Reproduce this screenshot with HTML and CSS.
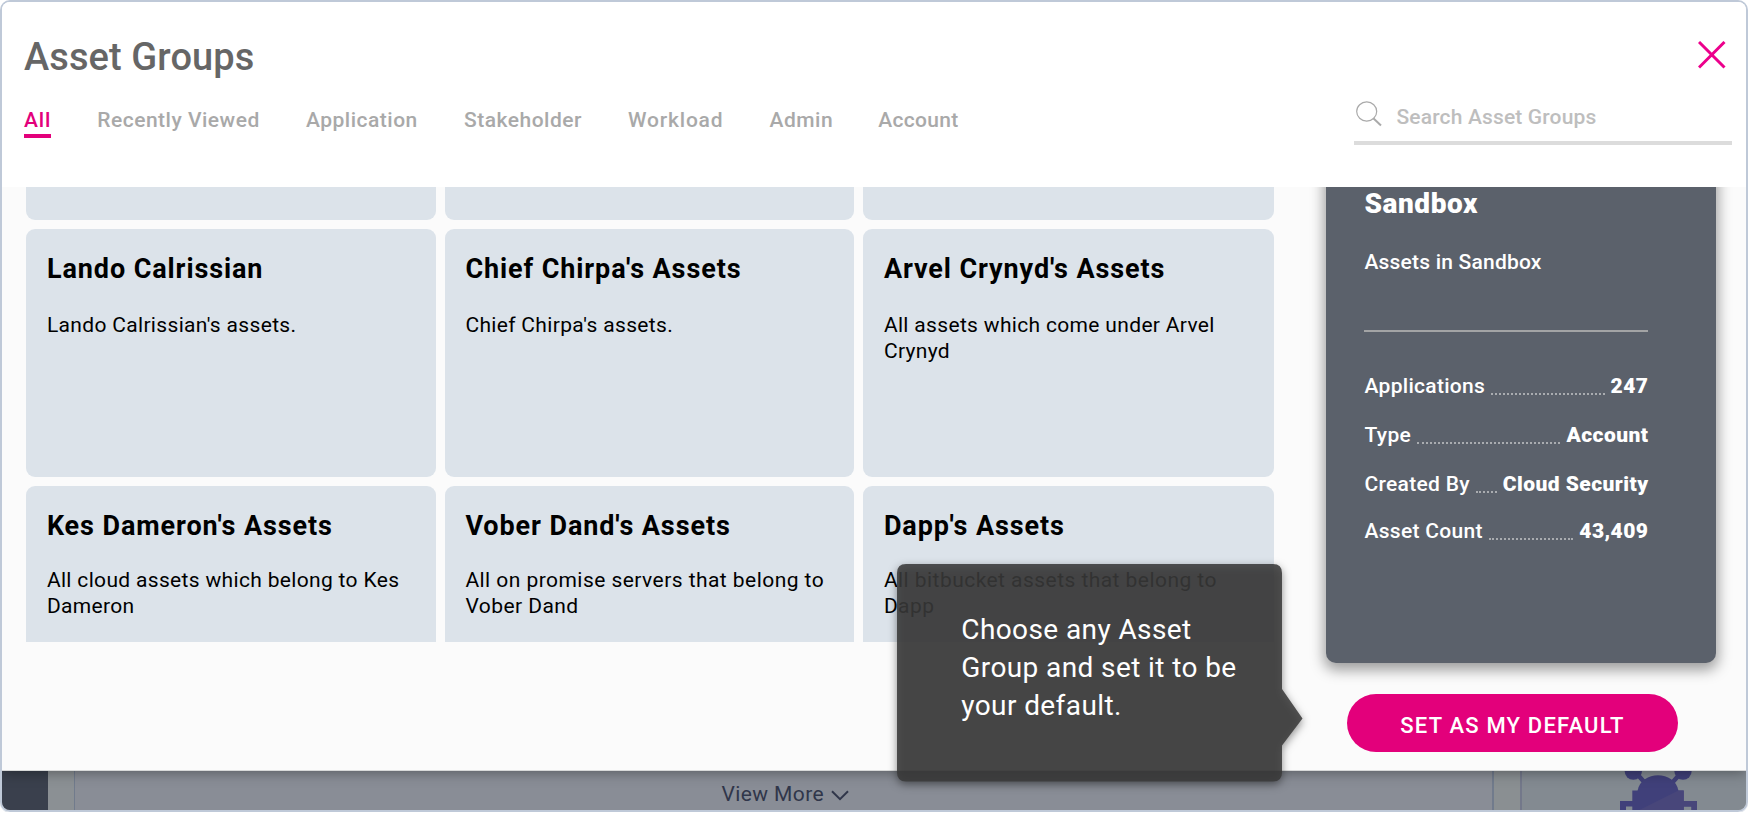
FILE: index.html
```html
<!DOCTYPE html>
<html lang="en">
<head>
<meta charset="utf-8">
<title>Asset Groups</title>
<link rel="stylesheet" href="styles.css">
</head>
<body>
<div class="frame">
  <section class="modal">
    <header class="header">
      <div class="title-row">
        <h1 class="title">Asset Groups</h1>
        <svg class="close" width="28" height="28" viewBox="0 0 28 28"><path d="M1 1L26.500 26.500M26.500 1L1 26.500"/></svg>
      </div>
      <div class="nav-row">
        <nav class="tabs">
          <a class="tab active">All</a><a class="tab">Recently Viewed</a><a class="tab">Application</a><a class="tab">Stakeholder</a><a class="tab wide">Workload</a><a class="tab">Admin</a><a class="tab tight">Account</a>
        </nav>
        <div class="search">
          <svg class="search-icon" width="28" height="28" viewBox="0 0 28 28"><ellipse cx="11.7" cy="10.5" rx="10" ry="9.6"/><path d="M18.3 17.3L26 24.6"/></svg>
          <span class="placeholder">Search Asset Groups</span>
        </div>
      </div>
    </header>
    <main class="content">
      <div class="grid">
        <article class="card stub"></article><article class="card stub"></article><article class="card stub"></article>
        <article class="card"><h2>Lando Calrissian</h2><p>Lando Calrissian's assets.</p></article>
        <article class="card"><h2>Chief Chirpa's Assets</h2><p>Chief Chirpa's assets.</p></article>
        <article class="card"><h2>Arvel Crynyd's Assets</h2><p>All assets which come under Arvel<br>Crynyd</p></article>
        <article class="card last"><h2>Kes Dameron's Assets</h2><p>All cloud assets which belong to Kes<br>Dameron</p></article>
        <article class="card last"><h2>Vober Dand's Assets</h2><p class="loose">All on promise servers that belong to<br>Vober Dand</p></article>
        <article class="card last"><h2>Dapp's Assets</h2><p class="loose">All bitbucket assets that belong to<br>Dapp</p></article>
      </div>
      <aside class="side">
        <div class="detail">
          <h2 class="detail-title">Sandbox</h2>
          <p class="detail-text">Assets in Sandbox</p>
          <div class="rule"></div>
          <dl class="facts">
            <div class="fact"><dt>Applications</dt><i></i><dd>247</dd></div>
            <div class="fact"><dt>Type</dt><i></i><dd>Account</dd></div>
            <div class="fact"><dt>Created By</dt><i></i><dd>Cloud Security</dd></div>
            <div class="fact"><dt>Asset Count</dt><i></i><dd>43,409</dd></div>
          </dl>
        </div>
        <button class="default-btn">SET AS MY DEFAULT</button>
      </aside>
    </main>
  </section>
  <footer class="backdrop">
    <div class="rail"></div>
    <div class="gutter-left"></div>
    <div class="panel">
      <span>View More</span>
      <svg class="chevron" width="18" height="11" viewBox="0 0 18 11"><path d="M1 1.200L9 9.200L17 1.200"/></svg>
    </div>
    <div class="gutter-right"></div>
    <div class="panel-right">
      <svg class="bug" width="78" height="40" viewBox="0 0 78 40">
        <g fill="#40407a">
          <circle cx="13.3" cy="0" r="8.7"/><circle cx="63" cy="0" r="8.7"/>
          <path d="M17 3L26 13M60 3L51 13" stroke="#40407a" stroke-width="4.5"/>
          <path d="M17.500 20C21 -1 55 -1 58.500 20Z"/>
          <path d="M12.300 19.500H63.700V30H77V40H71.500V35.500H63.700V40H12.300V35.500H6V40H0V30H12.300Z"/>
        </g>
        <path d="M58.500 19.500H63.700V30H77V40H71.500V35.500H63.700V40H17.500Z" fill="#48467a"/>
      </svg>
    </div>
  </footer>
  <div class="tooltip">
    <svg class="tip-shape" width="405.500" height="217.500" viewBox="0 0 405.500 217.500"><path d="M9 0H376Q385 0 385 9V125L405.500 154.500L385 181.500V208.500Q385 217.500 376 217.500H9Q0 217.500 0 208.500V9Q0 0 9 0Z"/></svg>
    <p class="tip-text">Choose any Asset<br>Group and set it to be<br>your default.</p>
  </div>
</div>
</body>
</html>
```
FILE: styles.css
```css
* { box-sizing: border-box; }
body { margin: 0; background: #fff; font-family: Roboto, "Liberation Sans", sans-serif; font-size: 21px; }
h1, h2, p, dl, dd { margin: 0; }

.frame { position: relative; display: flex; flex-direction: column; height: 812px; border: 2px solid #bfc9d8; border-radius: 10px; overflow: hidden; box-shadow: 0 1px 0 rgba(191,201,216,.5); }
.modal { position: relative; z-index: 1; flex: 0 0 769px; display: flex; flex-direction: column; background: #fbfbfb; border-bottom: 1px solid #d8d9d9; box-shadow: 0 2px 12px rgba(0,0,0,.35); }

.header { flex: 0 0 185px; background: #fff; padding: 32px 14px 0 22px; }
.title-row { display: flex; justify-content: space-between; height: 60px; padding-right: 6px; }
.title { font-size: 38px; font-weight: 500; line-height: 46px; letter-spacing: .1px; color: #666; }
.close { margin-top: 7px; fill: none; stroke: #ec008c; stroke-width: 3; }
.nav-row { display: flex; justify-content: space-between; }
.tabs { display: flex; gap: 46.200px; padding-top: 13px; height: 48px; }
.tab { height: 31px; line-height: 26px; font-weight: 500; letter-spacing: .5px; color: #a9a9a9; }
.tab.wide { letter-spacing: .8px; }
.tab.tight { letter-spacing: .3px; margin-left: -1px; }
.tab.active { color: #e3007b; letter-spacing: .8px; border-bottom: 4px solid #e3007b; }
.search { display: flex; width: 378px; height: 51px; border-bottom: 4px solid #dcdcdc; padding: 7px 0 0 1px; }
.search-icon { fill: none; stroke: #aaa; stroke-width: 1.200; }
.search-icon path { stroke-width: 2; }
.placeholder { margin-left: 13.500px; padding-top: 3px; line-height: 26px; font-weight: 500; letter-spacing: .15px; color: #bebebe; }

.content { flex: 1; display: flex; }
.grid { display: grid; grid-template-columns: 409.500px 409.500px 411px; grid-template-rows: 33px 248px 248px; gap: 9px; width: 1248px; height: 455px; margin-left: 24.400px; overflow: hidden; }
.card { background: #dce3ea; border-radius: 9px; padding: 22px 20.500px; color: #000; }
.card.stub { padding: 0; border-radius: 0 0 9px 9px; }
.card h2 { font-size: 27px; font-weight: 700; line-height: 36px; letter-spacing: .9px; white-space: nowrap; }
.card p { margin-top: 25px; line-height: 26px; letter-spacing: .33px; white-space: nowrap; }
.card.last p { margin-top: 23px; }
.card p.loose { letter-spacing: .45px; }

.side { width: 471.600px; height: 582px; overflow: hidden; padding-left: 51.600px; }
.detail { width: 390px; height: 505.500px; margin-top: -30px; padding: 30px 68px 0 38.500px; background: #5b616b; border-radius: 10px; color: #fff; box-shadow: 0 5px 14px 2px rgba(0,0,0,.38); }
.detail-title { font-size: 28px; font-weight: 900; line-height: 34px; letter-spacing: .55px; }
.detail-text { margin-top: 28px; line-height: 26px; font-weight: 500; letter-spacing: .2px; }
.rule { height: 2px; margin-top: 55px; background: #a3a4a5; }
.facts { display: grid; grid-template-rows: 49px 49px 47px 47px; margin-top: 41px; }
.fact { display: flex; line-height: 26px; white-space: nowrap; font-weight: 500; letter-spacing: .3px; }
.fact i { flex: 1; height: 22px; margin: 0 6px; border-bottom: 2px dotted #a9acb0; }
.fact dd { margin-right: -.5px; font-weight: 900; letter-spacing: .45px; }
.default-btn { display: block; width: 331px; height: 58px; margin: 31.500px 0 0 21px; padding: 5px 0 0 0; border: 0; border-radius: 29px; background: #e3007b; color: #fff; font: 500 22px/26px Roboto, sans-serif; letter-spacing: 1.200px; }

.backdrop { flex: 1; display: flex; background: #8a8f92; }
.rail { width: 45.500px; background: #3a404d; }
.gutter-left { width: 26.500px; background: #8b9094; }
.panel { width: 1420px; display: flex; padding: 10px 0 0 646.500px; border: 1px solid #717b8c; border-width: 0 2px 0 1px; background: #898d96; color: #30364a; line-height: 26px; letter-spacing: .4px; }
.chevron { margin: 9px 0 0 7px; fill: none; stroke: #30364a; stroke-width: 2; }
.gutter-right { width: 26px; }
.panel-right { flex: 1; border-left: 2px solid #73788a; background: #838a91; }
.bug { display: block; margin-left: 98px; }

.tooltip { position: absolute; z-index: 2; left: 895.300px; top: 562px; padding: 47px 0 0 64px; width: 385px; height: 217.500px; color: #fff; }
.tip-shape { position: absolute; left: 0; top: 0; fill: rgba(57,57,57,.87); filter: drop-shadow(0 3px 4px rgba(0,0,0,.5)); overflow: visible; }
.tip-text { position: relative; font-size: 28px; line-height: 38px; letter-spacing: .4px; white-space: nowrap; }
```
